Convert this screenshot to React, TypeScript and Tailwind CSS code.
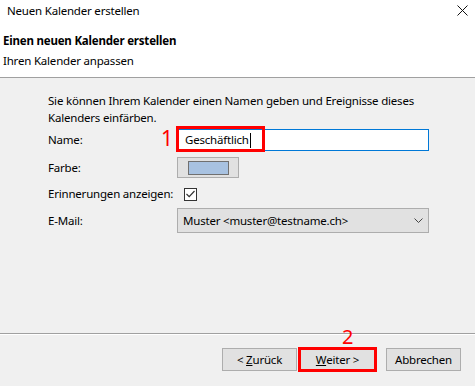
const font = { fontFamily: '"Noto Sans", "Segoe UI", sans-serif' };

const Btn = ({ children }: { children: React.ReactNode }) => (
  <button className="w-[75px] h-[23px] bg-[#e1e1e1] border border-[#adadad] text-[11.5px] tracking-[-0.2px] text-black leading-none">
    {children}
  </button>
);

export default function App() {
  return (
    <div
      className="relative w-[475px] h-[386px] bg-[#f0f0f0] flex flex-col text-[11.5px] tracking-[-0.2px] text-black overflow-hidden"
      style={font}
    >
      {/* title bar */}
      <div className="h-[24px] bg-white flex items-center justify-between pl-[7px] pr-[7px]">
        <span className="leading-none -mt-[2px]">Neuen Kalender erstellen</span>
        <svg width="11" height="11" viewBox="0 0 11 11" className="-mt-[3px]">
          <path d="M0.5 0.5L10.5 10.5M10.5 0.5L0.5 10.5" stroke="#111" strokeWidth="1" />
        </svg>
      </div>

      {/* header */}
      <div className="h-[54px] bg-white border-b border-[#a0a0a0] pl-[3px] pt-[7px] leading-[20px]">
        <div className="font-bold">Einen neuen Kalender erstellen</div>
        <div>Ihren Kalender anpassen</div>
      </div>

      {/* body */}
      <div className="flex-1 pl-[48px] pt-[14px]">
        <p className="leading-[17px] w-[385px]">
          Sie können Ihrem Kalender einen Namen geben und Ereignisse dieses Kalenders einfärben.
        </p>

        <div className="mt-[3px] h-[22px] flex items-center">
          <span className="w-[129px]">Name:</span>
          <div className="w-[252px] h-[22px] bg-white border border-[#0078d7] flex items-center pl-[7px]">
            <span>Geschäftlich</span>
            <span className="w-px h-[15px] bg-black ml-px" />
          </div>
        </div>

        <div className="mt-[6px] h-[21px] flex items-center">
          <span className="w-[129px]">Farbe:</span>
          <div className="w-[62px] h-[21px] bg-[#e1e1e1] border border-[#adadad] flex items-center justify-center">
            <div className="w-[41px] h-[14px] bg-[#a8c2e1] border border-[#707070]" />
          </div>
        </div>

        <div className="mt-[6px] h-[20px] flex items-center">
          <span className="w-[136px]">Erinnerungen anzeigen:</span>
          <div className="w-[13px] h-[13px] bg-white border border-[#333] flex items-center justify-center">
            <svg width="9" height="8" viewBox="0 0 9 8">
              <path d="M0.5 4L3.2 6.6L8.5 1" stroke="#333" strokeWidth="1.2" fill="none" />
            </svg>
          </div>
        </div>

        <div className="mt-[4px] h-[25px] flex items-center">
          <span className="w-[129px]">E-Mail:</span>
          <div className="w-[252px] h-[25px] bg-[#e1e1e1] border border-[#adadad] flex items-center justify-between pl-[5px] pr-[5px]">
            <span>Muster &lt;muster@testname.ch&gt;</span>
            <svg width="9" height="5" viewBox="0 0 9 5">
              <path d="M0.5 0.5L4.5 4.5L8.5 0.5" stroke="#444" strokeWidth="1" fill="none" />
            </svg>
          </div>
        </div>
      </div>

      {/* footer */}
      <div className="h-[53px] border-t border-[#a0a0a0]">
        <div className="border-t border-white" />
        <div className="flex justify-end pr-[14px] pt-[13px]">
          <div className="flex gap-[3px]">
            <Btn>
              &lt; <span className="underline">Z</span>urück
            </Btn>
            <Btn>
              <span className="underline">W</span>eiter &gt;
            </Btn>
          </div>
          <div className="ml-[11px]">
            <Btn>Abbrechen</Btn>
          </div>
        </div>
      </div>

      {/* annotations */}
      <div className="absolute left-[176px] top-[126px] w-[89px] h-[26px] border-[3px] border-[#ff0000]" />
      <span className="absolute left-[161px] top-[128px] text-[21px] leading-[20px] tracking-normal text-[#ff0000]">1</span>
      <div className="absolute left-[298px] top-[347px] w-[79px] h-[25px] border-[3px] border-[#ff0000]" />
      <span className="absolute left-[342px] top-[327px] text-[20px] leading-[20px] tracking-normal text-[#ff0000]">2</span>
    </div>
  );
}
